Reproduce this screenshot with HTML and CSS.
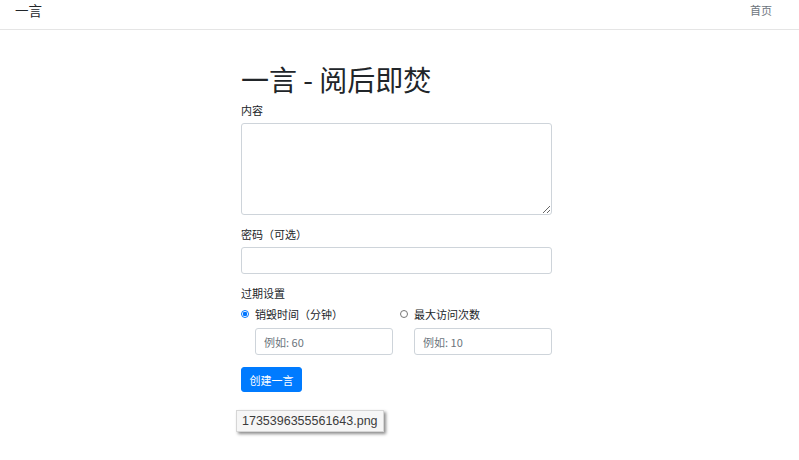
FILE: index.html
```html
<!DOCTYPE html>
<html lang="zh-CN">
<head>
<meta charset="utf-8">
<title>一言 - 阅后即焚</title>
<link rel="stylesheet" href="styles.css">
</head>
<body>
<nav class="navbar">
  <a class="brand" href="#">一言</a>
  <a class="nav-link" href="#">首页</a>
</nav>
<main class="page">
  <form class="form">
    <h1 class="title">一言 - 阅后即焚</h1>
    <div class="group">
      <label class="label">内容</label>
      <textarea class="control textarea"></textarea>
    </div>
    <div class="group">
      <label class="label">密码（可选）</label>
      <input class="control input" type="password">
    </div>
    <div class="group">
      <label class="label">过期设置</label>
      <div class="expire-row">
        <div class="expire-col">
          <label class="radio-line"><span class="radio checked"></span><span>销毁时间（分钟）</span></label>
          <input class="control small" type="text" placeholder="例如: 60">
        </div>
        <div class="expire-col">
          <label class="radio-line"><span class="radio"></span><span>最大访问次数</span></label>
          <input class="control small" type="text" placeholder="例如: 10">
        </div>
      </div>
    </div>
    <button class="btn" type="button">创建一言</button>
  </form>
</main>
<div class="tooltip">1735396355561643.png</div>
</body>
</html>
```
FILE: styles.css
```css
* { box-sizing: border-box; }
html, body { margin: 0; padding: 0; background: #fff; }
body {
  font-family: "Noto Sans CJK SC", "Liberation Sans", sans-serif;
  color: #212529;
  font-size: 11px;
  width: 799px;
  height: 460px;
  overflow: hidden;
  position: relative;
}
.navbar {
  height: 30px;
  border-bottom: 1px solid #e5e5e5;
  display: flex;
  align-items: center;
  justify-content: space-between;
  padding: 0 27px 0 15px;
}
.brand {
  font-size: 13.5px;
  color: #212529;
  text-decoration: none;
  line-height: 1;
  margin-top: -8px;
}
.nav-link {
  font-size: 11px;
  color: #6c757d;
  text-decoration: none;
  margin-top: -9px;
}
.page {
  width: 317px;
  margin: 0 auto;
}
.form {
  width: 311px;
  display: flex;
  flex-direction: column;
}
.title {
  font-size: 28px;
  font-weight: 400;
  line-height: 34px;
  margin: 32px 0 6px 0;
  letter-spacing: 0;
}
.group {
  display: flex;
  flex-direction: column;
  margin-bottom: 11px;
}
.label {
  font-size: 11px;
  line-height: 16px;
  margin-bottom: 5px;
}
.control {
  border: 1px solid #ced4da;
  border-radius: 3px;
  background: #fff;
  font-family: inherit;
  font-size: 11px;
  color: #495057;
  outline: none;
}
.textarea {
  height: 92px;
  resize: vertical;
}
.input {
  height: 27px;
}
.expire-row {
  display: grid;
  grid-template-columns: minmax(0, 1fr) minmax(0, 1fr);
  column-gap: 7px;
}
.expire-col {
  display: flex;
  flex-direction: column;
  min-width: 0;
}
.radio-line {
  display: flex;
  align-items: center;
  gap: 6px;
  line-height: 16px;
  margin-bottom: 6px;
}
.radio {
  width: 8px;
  height: 8px;
  border-radius: 50%;
  border: 1px solid #767676;
  background: #fff;
  flex: none;
}
.radio.checked {
  border: 1px solid #0075ff;
  background: radial-gradient(circle, #0075ff 0 2px, #fff 2.5px);
}
.small {
  height: 27px;
  width: auto;
  min-width: 0;
  margin-left: 14px;
  padding: 0 8px;
}
.small::placeholder {
  color: #6c757d;
}
.btn {
  align-self: flex-start;
  width: 61px;
  height: 25px;
  margin-top: 1px;
  background: #007bff;
  color: #fff;
  border: 1px solid #007bff;
  border-radius: 3px;
  font-family: inherit;
  font-size: 11px;
  padding: 0;
}
.tooltip {
  position: absolute;
  left: 236px;
  top: 410px;
  height: 22px;
  padding: 0 5px;
  line-height: 21px;
  font-family: "Liberation Sans", sans-serif;
  font-size: 12.5px;
  color: #3c3c3c;
  background: #f6f6f6;
  border: 1px solid #d6d6d6;
  box-shadow: 2px 2px 3px rgba(0,0,0,0.45);
}
```
